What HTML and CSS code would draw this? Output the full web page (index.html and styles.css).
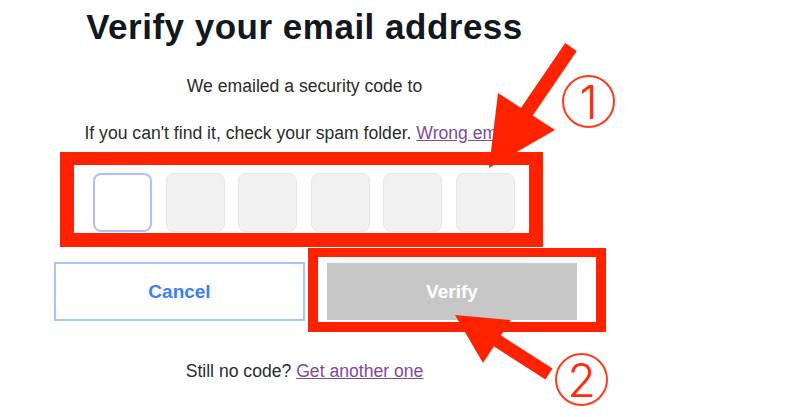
FILE: index.html
```html
<!DOCTYPE html>
<html>
<head>
    <title>Verify your email address</title>
    <link rel="stylesheet" href="styles.css">
</head>
<body>
    <div class="page">
        <h1 class="title">Verify your email address</h1>
        <p class="lead">We emailed a security code to</p>
        <p class="hint">If you can't find it, check your spam folder. <a href="#">Wrong email?</a></p>

        <!-- Markierung 1: Code-Felder -->
        <div class="callout callout-code">
            <div class="code-row">
                <div class="code-box is-active"></div>
                <div class="code-box"></div>
                <div class="code-box"></div>
                <div class="code-box"></div>
                <div class="code-box"></div>
                <div class="code-box"></div>
            </div>
        </div>

        <div class="actions">
            <button class="btn btn-cancel">Cancel</button>
            <!-- Markierung 2: Verify-Button -->
            <div class="callout callout-verify">
                <button class="btn btn-verify" disabled>Verify</button>
            </div>
        </div>

        <p class="resend">Still no code? <a href="#">Get another one</a></p>
    </div>

    <!-- Pfeile ueber dem Inhalt -->
    <svg class="arrows" width="795" height="417" viewBox="0 0 795 417">
        <line x1="571" y1="47" x2="526" y2="113" stroke-width="14"/>
        <polygon points="498,93 555,130 489,168"/>
        <line x1="549" y1="374" x2="496" y2="340" stroke-width="13"/>
        <polygon points="455,315 483,363 511,320"/>
    </svg>
    <span class="step step-1">1</span>
    <span class="step step-2">2</span>
</body>
</html>
```

FILE: styles.css
```css
body {
    font-family: "Liberation Sans", Arial, sans-serif;
    background-color: #fff;
    color: #2b2b2b;
    margin: 0;
    overflow: hidden;
}
.page {
    width: 501px;
    margin-left: 54px;
    padding-top: 7px;
    text-align: center;
}
.title {
    margin: 0;
    font-size: 35px;
    line-height: 40px;
    font-weight: 700;
    letter-spacing: 0.5px;
    color: #111820;
}
.lead,
.hint,
.resend {
    font-size: 17.6px;
    line-height: 22px;
    margin: 0;
}
.lead {
    margin-top: 28px;
}
.hint {
    margin-top: 25px;
}
.resend {
    margin-top: 28px;
}
a {
    color: #7d4a9c;
    text-decoration: underline;
}
.callout {
    border: solid #ff2200;
    box-sizing: border-box;
}
.callout-code {
    width: 483px;
    margin: 8px 0 0 6px;
    border-width: 13px 14px 14px 14px;
    padding: 8px 14px 1px 19px;
}
.code-row {
    display: flex;
    gap: 13.6px;
}
.code-box {
    width: 59px;
    height: 59px;
    box-sizing: border-box;
    background-color: #f1f1f1;
    border: 1px solid #e8e8e8;
    border-radius: 8px;
}
.code-box.is-active {
    background-color: #fff;
    border: 2px solid #abc2fb;
}
.actions {
    display: flex;
    align-items: flex-start;
    width: 552px;
    margin-top: 1px;
}
.btn {
    font-family: "Liberation Sans", Arial, sans-serif;
    font-size: 19px;
    font-weight: 700;
    box-sizing: border-box;
    padding: 0;
    margin: 0;
    cursor: pointer;
}
.btn-cancel {
    width: 251px;
    height: 59px;
    margin-top: 14px;
    background-color: #fff;
    border: 2px solid #a9c5f7;
    color: #3d80f5;
}
.callout-verify {
    margin-left: 3px;
    border-width: 9px 10px 10px 10px;
    padding: 6px 19px 2px 9px;
}
.btn-verify {
    display: block;
    width: 250px;
    height: 57px;
    border: none;
    background-color: #c7c7c7;
    color: #fff;
}
.arrows {
    position: absolute;
    top: 0;
    left: 0;
    pointer-events: none;
}
.arrows line {
    stroke: #ff2200;
}
.arrows polygon {
    fill: #ff2200;
}
.step {
    position: absolute;
    width: 53px;
    height: 53px;
    box-sizing: border-box;
    border: 2px solid #ff3a1c;
    border-radius: 50%;
    display: flex;
    align-items: center;
    justify-content: center;
    font-family: Inter, "Liberation Sans", sans-serif;
    font-weight: 300;
    font-size: 46px;
    line-height: 1;
    color: #ff2a0a;
}
.step-1 {
    left: 562px;
    top: 75px;
}
.step-2 {
    left: 555px;
    top: 353px;
}
```
